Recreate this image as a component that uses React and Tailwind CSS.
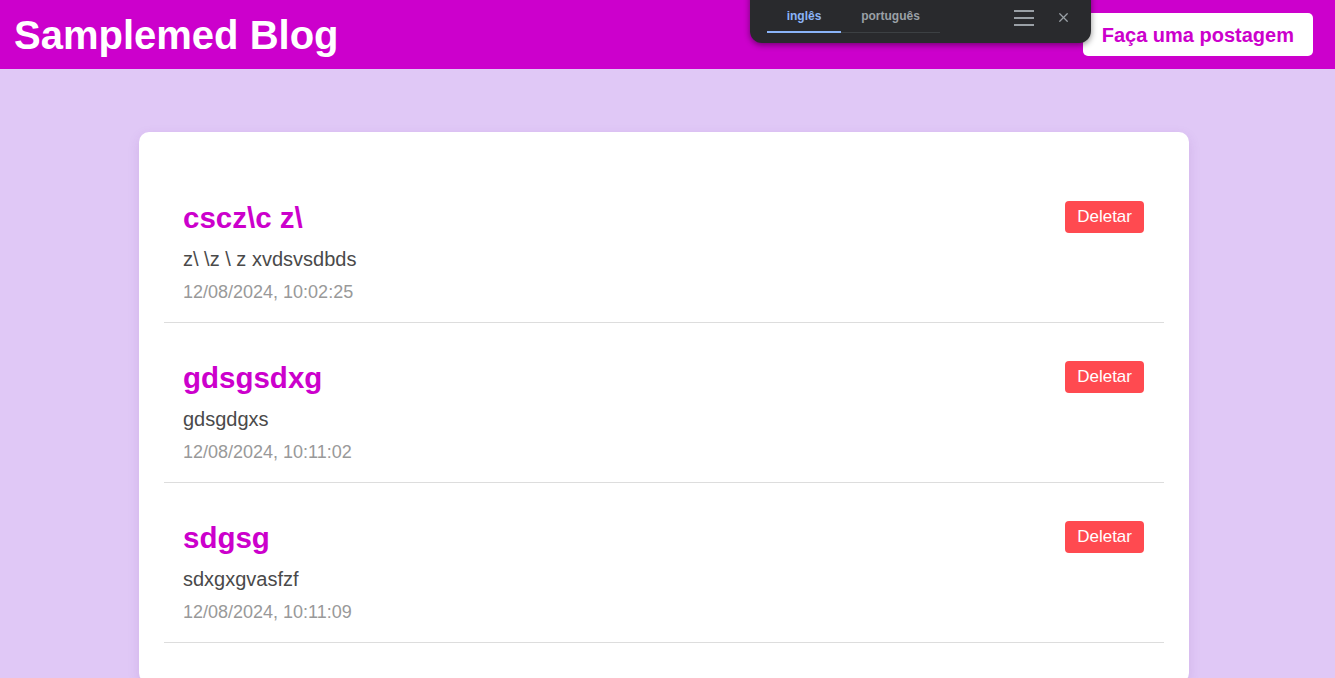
import { X } from 'lucide-react'

const posts = [
  { title: 'cscz\\c z\\', body: 'z\\ \\z \\ z xvdsvsdbds', date: '12/08/2024, 10:02:25' },
  { title: 'gdsgsdxg', body: 'gdsgdgxs', date: '12/08/2024, 10:11:02' },
  { title: 'sdgsg', body: 'sdxgxgvasfzf', date: '12/08/2024, 10:11:09' },
]

function TranslateBar() {
  return (
    <div className="absolute left-[750px] top-[-10px] w-[341px] h-[53px] pt-[10px] bg-[#292a2d] rounded-b-[12px] shadow-[0_2px_6px_rgba(0,0,0,0.45)] flex items-center pl-[17px] pr-[20px]">
      <div className="flex self-start mt-[7px]">
        <div className="w-[74px] h-[26px] flex items-start justify-center text-[12px] font-bold text-[#8ab4f8] border-b-2 border-[#8ab4f8]">
          inglês
        </div>
        <div className="w-[99px] h-[26px] flex items-start justify-center text-[12px] font-bold text-[#9aa0a6] border-b border-[#3c4043]">
          português
        </div>
      </div>
      <div className="ml-auto flex items-center gap-[22px] mb-[8px]">
        <div className="flex flex-col gap-[5px] w-[20px]">
          <span className="block h-[2px] bg-[#9aa0a6]" />
          <span className="block h-[2px] bg-[#9aa0a6]" />
          <span className="block h-[2px] bg-[#9aa0a6]" />
        </div>
        <X size={15} strokeWidth={2} className="text-[#9aa0a6]" />
      </div>
    </div>
  )
}

function Post({ post }) {
  return (
    <div className="px-[19px] pt-[38px] pb-[19px] border-b border-[#dddddd] flex items-start justify-between">
      <div>
        <h2 className="text-[29.5px] leading-[34px] font-bold text-[#cc00cc]">{post.title}</h2>
        <p className="mt-[12px] text-[20px] leading-[24px] text-[#4a4a4a]">{post.body}</p>
        <p className="mt-[10px] text-[18px] leading-[22px] text-[#999999]">{post.date}</p>
      </div>
      <button className="h-[32px] px-[12px] mr-px rounded-[4px] bg-[#ff4a50] text-white text-[17px]">
        Deletar
      </button>
    </div>
  )
}

export default function App() {
  return (
    <div className="min-h-[678px] bg-[#e0c8f6] font-['Liberation_Sans',Arial,sans-serif] overflow-hidden">
      <header className="relative h-[69px] bg-[#cc00cc] flex items-center justify-between pl-[14px] pr-[22px]">
        <h1 className="text-[40px] leading-none font-bold text-white">Samplemed Blog</h1>
        <TranslateBar />
        <button className="h-[43px] px-[19px] bg-white rounded-[5px] text-[20px] font-bold text-[#cc00cc]">
          Faça uma postagem
        </button>
      </header>
      <main className="pt-[63px] pl-[139px]">
        <div className="w-[1050px] bg-white rounded-[10px] shadow-[0_4px_12px_rgba(120,60,160,0.15)] pt-[31px] px-[25px] pb-[40px]">
          {posts.map((p, i) => (
            <Post key={i} post={p} />
          ))}
        </div>
      </main>
    </div>
  )
}
